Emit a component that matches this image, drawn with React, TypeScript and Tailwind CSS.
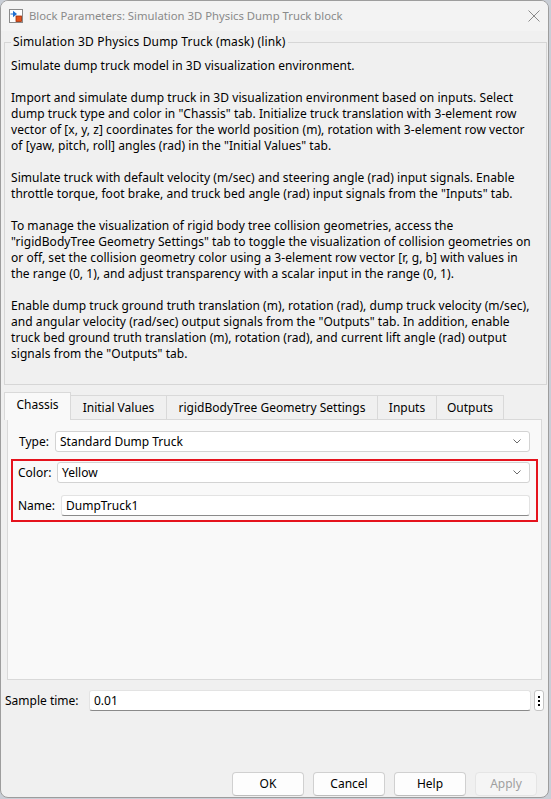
import React from 'react';

const paragraphs: string[][] = [
  ['Simulate dump truck model in 3D visualization environment.'],
  [
    'Import and simulate dump truck in 3D visualization environment based on inputs. Select',
    'dump truck type and color in "Chassis" tab. Initialize truck translation with 3-element row',
    'vector of [x, y, z] coordinates for the world position (m), rotation with 3-element row vector',
    'of [yaw, pitch, roll] angles (rad) in the "Initial Values" tab.',
  ],
  [
    'Simulate truck with default velocity (m/sec) and steering angle (rad) input signals. Enable',
    'throttle torque, foot brake, and truck bed angle (rad) input signals from the "Inputs" tab.',
  ],
  [
    'To manage the visualization of rigid body tree collision geometries, access the',
    '"rigidBodyTree Geometry Settings" tab to toggle the visualization of collision geometries on',
    'or off, set the collision geometry color using a 3-element row vector [r, g, b] with values in',
    'the range (0, 1), and adjust transparency with a scalar input in the range (0, 1).',
  ],
  [
    'Enable dump truck ground truth translation (m), rotation (rad), dump truck velocity (m/sec),',
    'and angular velocity (rad/sec) output signals from the "Outputs" tab. In addition, enable',
    'truck bed ground truth translation (m), rotation (rad), and current lift angle (rad) output',
    'signals from the "Outputs" tab.',
  ],
];

const tabs = [
  { label: 'Initial Values', w: 'w-[96px]' },
  { label: 'rigidBodyTree Geometry Settings', w: 'w-[211px]' },
  { label: 'Inputs', w: 'w-[59px]' },
  { label: 'Outputs', w: 'w-[67px]' },
];

function BlockIcon() {
  return (
    <svg width="14" height="14" viewBox="0 0 14 14">
      <rect x="0.5" y="0.5" width="13" height="13" fill="#fff" stroke="#8a8a8a" />
      <line x1="1.5" y1="5" x2="4" y2="5" stroke="#1f6fd0" strokeWidth="1.2" />
      <path d="M4 1.8 L4 8.2 L8 5 Z" fill="#1f6fd0" />
      <rect x="7" y="7" width="5.5" height="5.5" fill="#e2531b" stroke="#9c2d0a" strokeWidth="0.8" />
    </svg>
  );
}

function Chevron() {
  return (
    <svg width="8" height="5" viewBox="0 0 8 5" className="shrink-0">
      <path d="M0.5 0.5 L4 4 L7.5 0.5" fill="none" stroke="#6b6b6b" strokeWidth="1" />
    </svg>
  );
}

function Select({ value }: { value: string }) {
  return (
    <div className="flex-1 h-[21px] flex items-center justify-between bg-white border border-[#d3d3d3] rounded-[3px] pl-[4px] pr-[8px]">
      <span>{value}</span>
      <Chevron />
    </div>
  );
}

function TextField({ value }: { value: string }) {
  return (
    <div className="flex-1 h-[21px] flex items-center bg-white border border-[#e3e3e3] border-b-[#8a8a8a] rounded-[3px] pl-[4px]">
      {value}
    </div>
  );
}

function DialogButton({ label, disabled, w }: { label: string; disabled?: boolean; w: string }) {
  return (
    <div
      className={`${w} h-[24px] flex items-center justify-center rounded-[4px] border ${
        disabled
          ? 'bg-[#f5f5f5] border-[#e5e5e5] text-[#a0a0a0]'
          : 'bg-[#fdfdfd] border-[#d0d0d0] border-b-[#bdbdbd] text-black'
      }`}
    >
      {label}
    </div>
  );
}

export default function App() {
  return (
    <div className="w-[551px] h-[799px] bg-[#c9ced6] text-[12px] leading-[16px] text-black font-['Segoe_UI','Noto_Sans',sans-serif]">
      <div className="w-[549px] h-[798px] bg-[#f0f0f0] border border-[#9d9d9d] rounded-[8px] overflow-hidden flex flex-col">
        <div className="h-[30px] shrink-0 bg-[#f3f3f3] flex items-center pl-[8px] pr-[8px]">
          <BlockIcon />
          <span className="ml-[6px] text-[11.3px] text-[#8a8a8a]">
            Block Parameters: Simulation 3D Physics Dump Truck block
          </span>
          <svg width="12" height="12" viewBox="0 0 12 12" className="ml-auto">
            <path d="M0.5 0.5 L11.5 11.5 M11.5 0.5 L0.5 11.5" stroke="#8a8a8a" strokeWidth="1" />
          </svg>
        </div>

        <fieldset className="ml-[3px] w-[543px] mt-[3px] border border-[#d6d6d6] px-[6px] pt-[8px] pb-[22px]">
          <legend className="px-[2px] leading-[16px] tracking-[0.15px]">
            Simulation 3D Physics Dump Truck (mask) (link)
          </legend>
          <div className="flex flex-col gap-[16px] tracking-[0.05px]">
            {paragraphs.map((p, i) => (
              <div key={i}>
                {p.map((line, j) => (
                  <div key={j} className="whitespace-nowrap">
                    {line}
                  </div>
                ))}
              </div>
            ))}
          </div>
        </fieldset>

        <div className="mt-[7px] pl-[3px] flex items-end h-[28px]">
          <div className="relative z-10 w-[67px] h-[28px] bg-[#f9f9f9] border border-b-0 border-[#d9d9d9] flex justify-center pt-[4px]">
            Chassis
          </div>
          {tabs.map((t) => (
            <div
              key={t.label}
              className={`${t.w} h-[25px] border-t border-r border-[#d9d9d9] flex justify-center pt-[4px]`}
            >
              {t.label}
            </div>
          ))}
        </div>

        <div className="-mt-px ml-[6px] w-[535px] h-[261px] bg-[#f9f9f9] border border-[#d9d9d9] px-[3px] pt-[11px]">
          <div className="flex items-center pl-[8px] pr-[8px]">
            <span className="w-[36px] shrink-0">Type:</span>
            <Select value="Standard Dump Truck" />
          </div>
          <div className="mt-[7px] border-2 border-[#e5131d] pt-[1px] pb-[4px] pl-[5px] pr-[6px] flex flex-col gap-[12px]">
            <div className="flex items-center">
              <span className="w-[39px] shrink-0">Color:</span>
              <Select value="Yellow" />
            </div>
            <div className="flex items-center">
              <span className="w-[43px] shrink-0">Name:</span>
              <TextField value="DumpTruck1" />
            </div>
          </div>
        </div>

        <div className="mt-[10px] pl-[4px] flex items-center">
          <span className="w-[84px] shrink-0">Sample time:</span>
          <div className="w-[442px] flex">
            <TextField value="0.01" />
          </div>
          <div className="ml-[3px] w-[10px] h-[21px] bg-white border border-[#c4c4c4] rounded-[3px] flex flex-col items-center justify-center gap-[2px]">
            <span className="w-[2px] h-[2px] bg-black" />
            <span className="w-[2px] h-[2px] bg-black" />
            <span className="w-[2px] h-[2px] bg-black" />
          </div>
        </div>

        <div className="mt-auto pb-[1px] pr-[11px] flex justify-end gap-[9px]">
          <DialogButton label="OK" w="w-[72px]" />
          <DialogButton label="Cancel" w="w-[72px]" />
          <DialogButton label="Help" w="w-[72px]" />
          <DialogButton label="Apply" w="w-[62px]" disabled />
        </div>
      </div>
    </div>
  );
}
